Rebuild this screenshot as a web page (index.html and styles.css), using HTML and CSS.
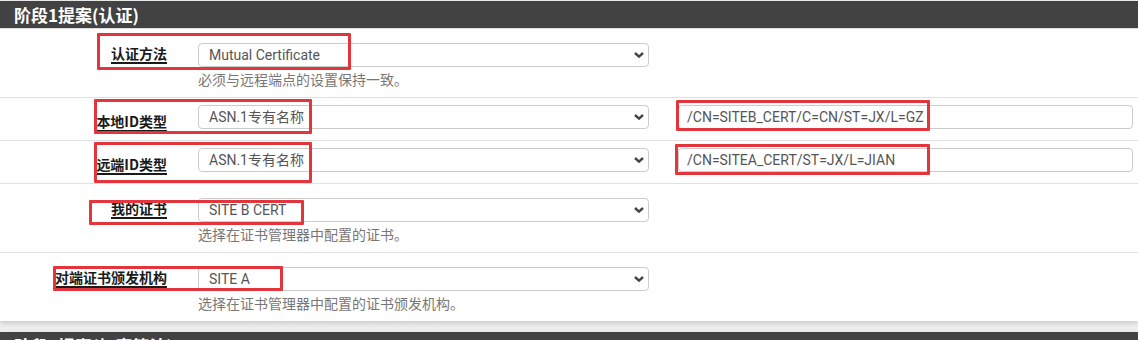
FILE: index.html
```html
<!DOCTYPE html>
<html lang="zh-CN">
<head>
<meta charset="utf-8">
<title>阶段1提案(认证)</title>
<link rel="stylesheet" href="styles.css">
</head>
<body>
<div class="panel">
  <div class="panel-heading">阶段1提案(认证)</div>
  <div class="panel-body">
    <div class="row row-help">
      <div class="label"><span>认证方法</span></div>
      <div class="field">
        <div class="select"><span>Mutual Certificate</span><svg class="chev" width="10" height="6" viewBox="0 0 10 6"><path d="M1 1 L5 4.6 L9 1" fill="none" stroke="#444" stroke-width="2.4"/></svg></div>
        <div class="help">必须与远程端点的设置保持一致。</div>
      </div>
      <div class="mark mark-auth"></div>
    </div>
    <div class="row row-plain">
      <div class="label"><span>本地ID类型</span></div>
      <div class="field">
        <div class="select"><span>ASN.1专有名称</span><svg class="chev" width="10" height="6" viewBox="0 0 10 6"><path d="M1 1 L5 4.6 L9 1" fill="none" stroke="#444" stroke-width="2.4"/></svg></div>
      </div>
      <div class="field-extra">
        <div class="input">/CN=SITEB_CERT/C=CN/ST=JX/L=GZ</div>
      </div>
      <div class="mark mark-local-label"></div>
      <div class="mark mark-local-input"></div>
    </div>
    <div class="row row-plain">
      <div class="label"><span>远端ID类型</span></div>
      <div class="field">
        <div class="select"><span>ASN.1专有名称</span><svg class="chev" width="10" height="6" viewBox="0 0 10 6"><path d="M1 1 L5 4.6 L9 1" fill="none" stroke="#444" stroke-width="2.4"/></svg></div>
      </div>
      <div class="field-extra">
        <div class="input">/CN=SITEA_CERT/ST=JX/L=JIAN</div>
      </div>
      <div class="mark mark-remote-label"></div>
      <div class="mark mark-remote-input"></div>
    </div>
    <div class="row row-help">
      <div class="label"><span>我的证书</span></div>
      <div class="field">
        <div class="select"><span>SITE B CERT</span><svg class="chev" width="10" height="6" viewBox="0 0 10 6"><path d="M1 1 L5 4.6 L9 1" fill="none" stroke="#444" stroke-width="2.4"/></svg></div>
        <div class="help">选择在证书管理器中配置的证书。</div>
      </div>
      <div class="mark mark-cert"></div>
    </div>
    <div class="row row-help row-last">
      <div class="label"><span>对端证书颁发机构</span></div>
      <div class="field">
        <div class="select"><span>SITE A</span><svg class="chev" width="10" height="6" viewBox="0 0 10 6"><path d="M1 1 L5 4.6 L9 1" fill="none" stroke="#444" stroke-width="2.4"/></svg></div>
        <div class="help">选择在证书管理器中配置的证书颁发机构。</div>
      </div>
      <div class="mark mark-ca"></div>
    </div>
  </div>
</div>
<div class="panel">
  <div class="panel-heading">阶段1提案(加密算法)</div>
</div>
</body>
</html>
```
FILE: styles.css
```css
* { box-sizing: border-box; }
html, body { margin: 0; padding: 0; }
body {
  background: #f0f0f0;
  font-family: Roboto, "Noto Sans CJK SC", sans-serif;
  font-size: 14px;
  color: #212121;
  padding-top: 1px;
  overflow: hidden;
}
.panel {
  background: #fff;
  box-shadow: 0 2px 6px rgba(0,0,0,0.18);
  margin-bottom: 11px;
}
.panel-heading {
  background: #424242;
  color: #fff;
  height: 28px;
  border-bottom: 1px solid #dcdcdc;
  padding: 0 14px;
  font-family: "Noto Sans CJK SC", sans-serif;
  font-weight: bold;
  font-size: 17px;
  line-height: 27px;
}
.row {
  position: relative;
  display: grid;
  grid-template-columns: 198px 451px 1fr;
  border-bottom: 1px solid #e0e0e0;
}
.row-last { border-bottom: none; }
.row-help { padding: 14px 0 8px; }
.row-plain { padding: 7px 0 10px; }
.label {
  text-align: right;
  padding-right: 31px;
  font-family: "Noto Sans CJK SC", sans-serif;
  font-weight: bold;
  font-size: 14px;
  line-height: 18px;
  color: #1a1a1a;
}
.row-help .label { padding-top: 1px; }
.row-plain .label { padding-top: 7px; }
.label span {
  text-decoration: underline;
  text-decoration-thickness: 1.5px;
  text-underline-offset: 3px;
}
.select, .input {
  height: 24px;
  border: 1px solid #ccc;
  border-radius: 4px;
  background: #fff;
  color: #555;
  font-size: 14px;
  line-height: 22px;
  white-space: nowrap;
}
.select {
  display: flex;
  align-items: center;
  justify-content: space-between;
  padding: 0 4px 0 10px;
}
.input { padding: 0 8px; }
.chev { display: block; }
.help {
  margin-top: 4px;
  color: #777;
  font-size: 14px;
  line-height: 18px;
  white-space: nowrap;
}
.field-extra { padding: 0 5px 0 29px; }
.mark {
  position: absolute;
  border: 3px solid #e2363c;
  border-radius: 1px;
  pointer-events: none;
}
.mark-auth { left: 97px; top: 4px; width: 254px; height: 37px; }
.mark-local-label { left: 94px; top: 1px; width: 218px; height: 35px; }
.mark-local-input { left: 676px; top: 2px; width: 254px; height: 31px; }
.mark-remote-label { left: 94px; top: 1px; width: 218px; height: 41px; }
.mark-remote-input { left: 675px; top: 3px; width: 255px; height: 31px; }
.mark-cert { left: 89px; top: 16px; width: 215px; height: 25px; }
.mark-ca { left: 53px; top: 13px; width: 230px; height: 25px; }
```
